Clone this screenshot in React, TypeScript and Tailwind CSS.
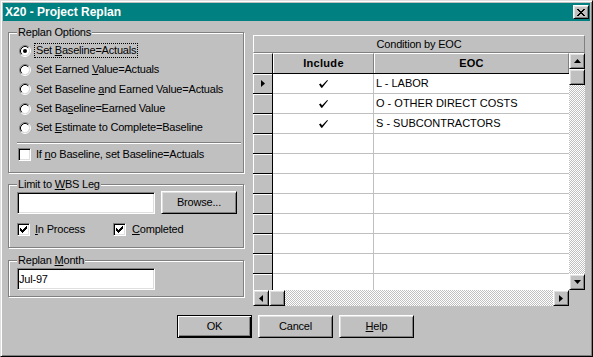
import React from 'react';

const raised =
  'border border-t-white border-l-white border-r-black border-b-black shadow-[inset_1px_1px_0_#dfdfdf,inset_-1px_-1px_0_#808080] bg-[#c0c0c0]';
const sunken =
  'border border-t-[#808080] border-l-[#808080] border-r-white border-b-white shadow-[inset_1px_1px_0_#000,inset_-1px_-1px_0_#dfdfdf] bg-white';
const hatch =
  'bg-[repeating-conic-gradient(#c0c0c0_0%_25%,#ffffff_0%_50%)] bg-[length:2px_2px]';

function Radio({ checked = false }: { checked?: boolean }) {
  return (
    <svg width="12" height="12" viewBox="0 0 12 12" className="shrink-0">
      <circle cx="6" cy="6" r="4.2" fill="#fff" />
      <path d="M2.11 9.89 A5.5 5.5 0 0 1 9.89 2.11" fill="none" stroke="#808080" />
      <path d="M9.89 2.11 A5.5 5.5 0 0 1 2.11 9.89" fill="none" stroke="#fff" />
      <path d="M2.82 9.18 A4.5 4.5 0 0 1 9.18 2.82" fill="none" stroke="#000" />
      <path d="M9.18 2.82 A4.5 4.5 0 0 1 2.82 9.18" fill="none" stroke="#dfdfdf" />
      {checked && <circle cx="6" cy="6" r="2" fill="#000" />}
    </svg>
  );
}

function Check({ checked = false }: { checked?: boolean }) {
  return (
    <div className={`w-[13px] h-[13px] shrink-0 flex items-center justify-center ${sunken}`}>
      {checked && (
        <svg width="7" height="7" viewBox="0 0 7 7" shapeRendering="crispEdges">
          <path d="M0 2h1v1h1v1h1v-1h1v-1h1v-1h1v-1h1v3h-1v1h-1v1h-1v1h-1v1h-1v-1h-1v-1h-1z" fill="#000" />
        </svg>
      )}
    </div>
  );
}

function Group({
  label,
  className,
  children,
}: {
  label: React.ReactNode;
  className: string;
  children?: React.ReactNode;
}) {
  return (
    <div
      className={`relative border border-[#808080] shadow-[inset_1px_1px_0_#fff,1px_1px_0_#fff] ${className}`}
    >
      <span className="absolute left-[8px] top-[-8px] px-[1px] leading-[14px] bg-[#c0c0c0]">
        {label}
      </span>
      {children}
    </div>
  );
}

function Arrow({ dir }: { dir: 'up' | 'down' | 'left' | 'right' }) {
  const paths = {
    up: 'M3 0 L6.5 4 L-0.5 4 Z',
    down: 'M-0.5 0 L6.5 0 L3 4 Z',
    left: 'M4 -0.5 L4 6.5 L0 3 Z',
    right: 'M0 -0.5 L0 6.5 L4 3 Z',
  };
  const vertical = dir === 'up' || dir === 'down';
  return (
    <div className={`w-[16px] h-[16px] shrink-0 flex items-center justify-center ${raised}`}>
      <svg
        width={vertical ? 7 : 4}
        height={vertical ? 4 : 7}
        viewBox={vertical ? '-0.5 0 7 4' : '0 -0.5 4 7'}
      >
        <path d={paths[dir]} fill="#000" />
      </svg>
    </div>
  );
}

function GridCheck() {
  return (
    <svg width="9" height="8" viewBox="0 0 9 8">
      <path d="M0 4.2 L1.8 3.4 L3 5.4 L8.2 0 L9 0.6 L3.2 7.8 L2.2 7.8 Z" fill="#000" />
    </svg>
  );
}

const rows = [
  { eoc: 'L - LABOR', inc: true },
  { eoc: 'O - OTHER DIRECT COSTS', inc: true },
  { eoc: 'S - SUBCONTRACTORS', inc: true },
  ...Array.from({ length: 8 }, () => ({ eoc: '', inc: false })),
];

export default function App() {
  return (
    <div className="w-[593px] h-[357px] bg-[#c0c0c0] border border-t-[#dfdfdf] border-l-[#dfdfdf] border-r-black border-b-black shadow-[inset_1px_1px_0_#fff,inset_-1px_-1px_0_#808080] p-[2px] font-['Liberation_Sans',Arial,sans-serif] text-[11px] text-black leading-[13px] tracking-[-0.2px] select-none">
      {/* title bar */}
      <div className="h-[18px] bg-[#008080] flex items-center justify-between pl-[2px] pr-[1px]">
        <span className="text-white font-bold text-[12px] tracking-normal">X20 - Project Replan</span>
        <div className={`w-[16px] h-[14px] flex items-center justify-center ${raised}`}>
          <svg width="8" height="7" viewBox="0 0 8 7" shapeRendering="crispEdges">
            <path
              d="M0 0h2v1h1v1h2v-1h1v-1h2v1h-1v1h-1v1h-1v1h1v1h1v1h1v1h-2v-1h-1v-1h-2v1h-1v1h-2v-1h1v-1h1v-1h1v-1h-1v-1h-1v-1h-1z"
              fill="#000"
            />
          </svg>
        </div>
      </div>

      <div className="flex h-[285px]">
        {/* left column */}
        <div className="ml-[5px] w-[236px] pt-[11px] flex flex-col">
          <Group label="Replan Options" className="h-[141px]">
            <div className="pt-[8px] pl-[10px] flex flex-col">
              <div className="h-[19px] flex items-center">
                <Radio checked />
                <span className="ml-[3px] px-[1px] border border-dotted border-black">
                  Set <u>B</u>aseline=Actuals
                </span>
              </div>
              <div className="h-[19px] flex items-center">
                <Radio />
                <span className="ml-[3px] px-[1px] border border-transparent">
                  Set Earned <u>V</u>alue=Actuals
                </span>
              </div>
              <div className="h-[20px] flex items-center">
                <Radio />
                <span className="ml-[3px] px-[1px] border border-transparent">
                  Set Baseline <u>a</u>nd Earned Value=Actuals
                </span>
              </div>
              <div className="h-[19px] flex items-center">
                <Radio />
                <span className="ml-[3px] px-[1px] border border-transparent">
                  Set Ba<u>s</u>eline=Earned Value
                </span>
              </div>
              <div className="h-[19px] flex items-center">
                <Radio />
                <span className="ml-[3px] px-[1px] border border-transparent">
                  Set <u>E</u>stimate to Complete=Baseline
                </span>
              </div>
            </div>
            <div className="mt-[5px] ml-[8px] mr-[2px] h-[2px] border-t border-t-[#808080] border-b border-b-white" />
            <div className="mt-[4px] ml-[9px] h-[13px] flex items-center">
              <Check />
              <span className="ml-[5px]">
                If <u>n</u>o Baseline, set Baseline=Actuals
              </span>
            </div>
          </Group>

          <Group
            label={
              <>
                Limit to <u>W</u>BS Leg
              </>
            }
            className="mt-[11px] h-[64px]"
          >
            <div className="pt-[6px] pl-[8px] flex items-start">
              <div className={`mt-[1px] w-[138px] h-[22px] ${sunken}`} />
              <div className={`ml-[6px] w-[76px] h-[23px] flex items-center justify-center ${raised}`}>
                Browse...
              </div>
            </div>
            <div className="mt-[9px] pl-[8px] h-[13px] flex items-center">
              <div className="w-[96px] flex items-center">
                <Check checked />
                <span className="ml-[5px]">
                  <u>I</u>n Process
                </span>
              </div>
              <Check checked />
              <span className="ml-[6px]">
                <u>C</u>ompleted
              </span>
            </div>
          </Group>

          <Group
            label={
              <>
                Replan <u>M</u>onth
              </>
            }
            className="mt-[12px] h-[37px]"
          >
            <div className="pt-[7px] pl-[8px]">
              <div className={`w-[138px] h-[22px] pl-[1px] flex items-center ${sunken}`}>Jul-97</div>
            </div>
          </Group>
        </div>

        {/* grid */}
        <div className="ml-[9px] mt-[14px] w-[332px] flex flex-col">
          <div className="h-[18px] flex items-center justify-center border-t border-l border-t-white border-l-white border-r border-b border-r-[#808080] border-b-[#808080]">
            Condition by EOC
          </div>
          <div className="flex">
            <div className="w-[316px] flex flex-col">
              <div className="h-[21px] flex border-b border-b-black">
                <div className="w-[20px] border-t border-l border-t-white border-l-white border-r border-r-black" />
                <div className="w-[101px] flex items-center justify-center font-bold tracking-[0.3px] border-t border-l border-t-white border-l-white border-r border-r-[#808080]">
                  Include
                </div>
                <div className="w-[195px] flex items-center justify-center font-bold tracking-[0.3px] border-t border-l border-t-white border-l-white border-r border-r-[#808080]">
                  EOC
                </div>
              </div>
              <div className="h-[216px] overflow-hidden flex flex-col">
                {rows.map((r, i) => (
                  <div key={i} className="h-[20px] shrink-0 flex">
                    <div className="w-[20px] bg-[#c0c0c0] border-r border-b border-black shadow-[inset_1px_1px_0_#fff] flex items-center justify-center">
                      {i === 0 && (
                        <svg width="4" height="7" viewBox="0 0 4 7">
                          <path d="M0 0 L4 3.5 L0 7 Z" fill="#000" />
                        </svg>
                      )}
                    </div>
                    <div className="w-[101px] bg-white border-r border-b border-[#c0c0c0] flex items-center justify-center">
                      {r.inc && <GridCheck />}
                    </div>
                    <div className="w-[195px] bg-white border-b border-[#c0c0c0] flex items-center pl-[2px] tracking-normal">
                      {r.eoc}
                    </div>
                  </div>
                ))}
              </div>
              <div className="h-[16px] flex">
                <Arrow dir="left" />
                <div className={`w-[16px] h-[16px] ${raised}`} />
                <div className={`flex-1 ${hatch}`} />
                <Arrow dir="right" />
              </div>
            </div>
            <div className="w-[16px] h-[237px] flex flex-col">
              <Arrow dir="up" />
              <div className={`w-[16px] h-[16px] ${raised}`} />
              <div className={`flex-1 ${hatch}`} />
              <Arrow dir="down" />
            </div>
          </div>
        </div>
      </div>

      {/* buttons */}
      <div className="mt-[9px] ml-[174px] flex gap-[6px]">
        <div className="w-[75px] h-[23px] flex items-center justify-center bg-[#c0c0c0] border border-black shadow-[inset_1px_1px_0_#fff,inset_-1px_-1px_0_#000,inset_-2px_-2px_0_#808080]">
          OK
        </div>
        <div className={`w-[75px] h-[23px] flex items-center justify-center ${raised}`}>Cancel</div>
        <div className={`w-[75px] h-[23px] flex items-center justify-center ${raised}`}>
          <u>H</u>elp
        </div>
      </div>
    </div>
  );
}
